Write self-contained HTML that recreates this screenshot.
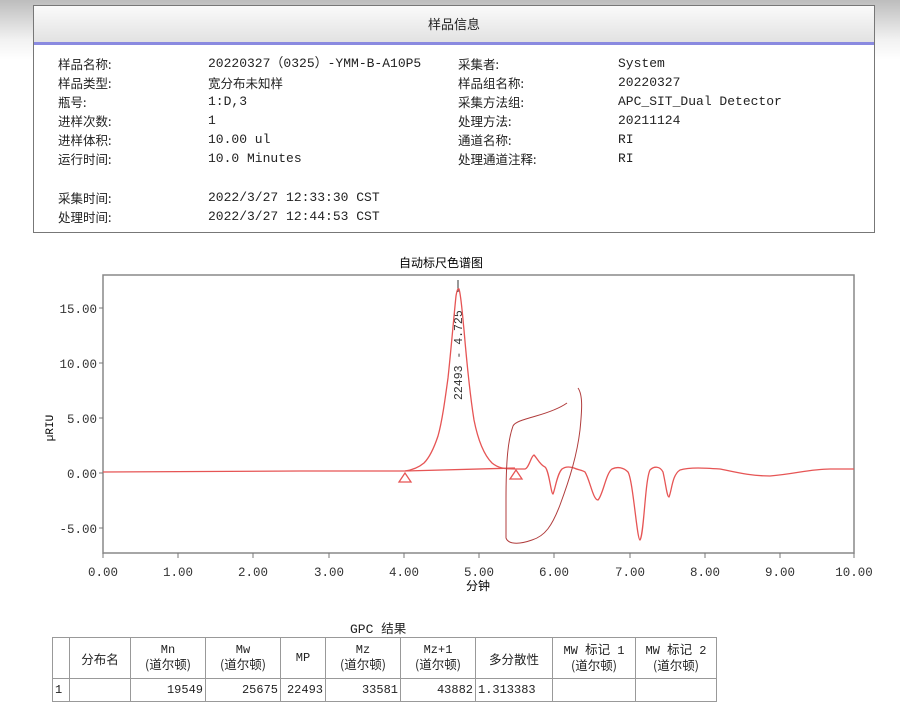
<!DOCTYPE html>
<html><head><meta charset="utf-8">
<style>
body{margin:0;width:900px;height:728px;background:#fff;overflow:hidden;position:relative;font-family:"Liberation Mono","Noto Sans CJK SC",monospace;color:#222}
.topbg{position:absolute;left:0;top:0;width:900px;height:60px;background:linear-gradient(#bdbdbd,#f2f2f2 40px,#fff)}
.box{position:absolute;left:33px;top:5px;width:840px;height:226px;border:1px solid #777;background:#fff}
.hdr{height:36px;background:linear-gradient(#fafafa,#e2e2e2);border-bottom:3px solid #8a8ae0;text-align:center;line-height:36px;font-size:13px;font-family:"Noto Sans CJK SC",sans-serif}
.t{position:absolute;font-size:13px;white-space:nowrap;line-height:19px}
.t div{height:19px}
.c{font-family:"Noto Sans CJK SC",sans-serif;font-size:12.5px}
table{position:absolute;left:52px;top:637px;border-collapse:collapse;font-size:12px}
td{border:1px solid #999;padding:0 2px;font-family:"Liberation Mono","Noto Sans CJK SC",monospace;line-height:13px}
tr.h td{height:40px;text-align:center}
tr.d td{height:22px;text-align:right}
</style></head><body>
<div class="topbg"></div>
<div class="box"><div class="hdr">样品信息</div></div>
<div class="t c" style="left:58px;top:54px"><div>样品名称:</div><div>样品类型:</div><div>瓶号:</div><div>进样次数:</div><div>进样体积:</div><div>运行时间:</div></div>
<div class="t c" style="left:58px;top:188px"><div>采集时间:</div><div>处理时间:</div></div>
<div class="t" style="left:208px;top:54px"><div>20220327（0325）-YMM-B-A10P5</div><div class="c">宽分布未知样</div><div>1:D,3</div><div>1</div><div>10.00 ul</div><div>10.0 Minutes</div></div>
<div class="t" style="left:208px;top:188px"><div>2022/3/27 12:33:30 CST</div><div>2022/3/27 12:44:53 CST</div></div>
<div class="t c" style="left:458px;top:54px"><div>采集者:</div><div>样品组名称:</div><div>采集方法组:</div><div>处理方法:</div><div>通道名称:</div><div>处理通道注释:</div></div>
<div class="t" style="left:618px;top:54px"><div>System</div><div>20220327</div><div>APC_SIT_Dual Detector</div><div>20211124</div><div>RI</div><div>RI</div></div>

<svg style="position:absolute;left:0;top:240px" width="900" height="360" viewBox="0 240 900 360">
<text x="441" y="267" font-size="12" text-anchor="middle" font-family="Noto Sans CJK SC,sans-serif">自动标尺色谱图</text>
<rect x="103" y="275" width="751" height="278" fill="none" stroke="#888" stroke-width="1.5"/>
<g stroke="#777" stroke-width="1">
<line x1="99" y1="308" x2="103" y2="308"/><line x1="99" y1="363" x2="103" y2="363"/><line x1="99" y1="418" x2="103" y2="418"/><line x1="99" y1="473" x2="103" y2="473"/><line x1="99" y1="528" x2="103" y2="528"/>
<path d="M103 553v5M178 553v5M253 553v5M329 553v5M404 553v5M479 553v5M554 553v5M630 553v5M705 553v5M780 553v5M854 553v5"/>
</g>
<g font-size="12.5" fill="#333" font-family="Liberation Mono,monospace">
<text x="97" y="313" text-anchor="end">15.00</text><text x="97" y="368" text-anchor="end">10.00</text><text x="97" y="423" text-anchor="end">5.00</text><text x="97" y="478" text-anchor="end">0.00</text><text x="97" y="533" text-anchor="end">-5.00</text>
<text x="103" y="576" text-anchor="middle">0.00</text><text x="178" y="576" text-anchor="middle">1.00</text><text x="253" y="576" text-anchor="middle">2.00</text><text x="329" y="576" text-anchor="middle">3.00</text><text x="404" y="576" text-anchor="middle">4.00</text><text x="479" y="576" text-anchor="middle">5.00</text><text x="554" y="576" text-anchor="middle">6.00</text><text x="630" y="576" text-anchor="middle">7.00</text><text x="705" y="576" text-anchor="middle">8.00</text><text x="780" y="576" text-anchor="middle">9.00</text><text x="854" y="576" text-anchor="middle">10.00</text>
</g>
<text x="466" y="590" font-size="12" font-family="Noto Sans CJK SC,sans-serif">分钟</text>
<text transform="translate(53,428) rotate(-90)" font-size="11" text-anchor="middle">µRIU</text>
<line x1="458" y1="280" x2="458" y2="292" stroke="#333"/>
<text transform="translate(462,400) rotate(-90)" font-size="11.5" fill="#333">22493 - 4.725</text>
<g fill="none" stroke="#e65555" stroke-width="1.3">
<path d="M103 472 L300 471 L405 471 C412 470 418 468 424 463 C430 457 434 448 438 436 C442 422 445 400 448 378 C451 350 454 315 456 296 C457 290 458 288 459 289 C461 295 462 310 464 330 C467 365 470 395 474 420 C478 440 484 455 492 463 C498 468 504 469 515 469 L525 469 C529 468 531 456 534 455 C537 458 540 465 545 467 C549 470 551 494 553 494 C555 490 557 474 562 469 C566 466 571 467 574 468 C578 470 582 470 585 472 C590 480 593 500 598 500 C603 495 606 473 612 469 C618 466 624 468 628 472 C633 480 637 540 640 540 C644 535 645 480 650 470 C654 466 660 466 663 472 C666 485 667 497 669 497 C672 490 672 475 680 470 C690 467 705 468 720 469 C735 472 750 476 770 476 C795 474 810 469 830 469 L854 469"/>
<path d="M405 471 L515 468"/>
<path d="M405 473 L399 482 L411 482 Z"/>
<path d="M516 470 L510 479 L522 479 Z"/>
</g>
<path d="M567 403 C560 408 550 412 536 416 C522 420 515 422 513 426 C508 440 506 460 506 500 L506 538 C508 544 518 545 532 540 C545 536 552 526 560 505 C570 478 577 455 580 430 C582 410 583 395 578 388" fill="none" stroke="#b03c3c" stroke-width="1"/>
</svg>

<div class="t" style="left:350px;top:618px">GPC <span class="c">结果</span></div>
<table>
<tr class="h"><td style="width:12px"></td><td class="c" style="width:56px">分布名</td><td style="width:70px">Mn<br><span class="c">(道尔顿)</span></td><td style="width:70px">Mw<br><span class="c">(道尔顿)</span></td><td style="width:40px">MP</td><td style="width:70px">Mz<br><span class="c">(道尔顿)</span></td><td style="width:70px">Mz+1<br><span class="c">(道尔顿)</span></td><td class="c" style="width:72px">多分散性</td><td style="width:78px">MW <span class="c">标记</span> 1<br><span class="c">(道尔顿)</span></td><td style="width:76px">MW <span class="c">标记</span> 2<br><span class="c">(道尔顿)</span></td></tr>
<tr class="d"><td style="text-align:left">1</td><td></td><td>19549</td><td>25675</td><td>22493</td><td>33581</td><td>43882</td><td style="text-align:left">1.313383</td><td></td><td></td></tr>
</table>
</body></html>
